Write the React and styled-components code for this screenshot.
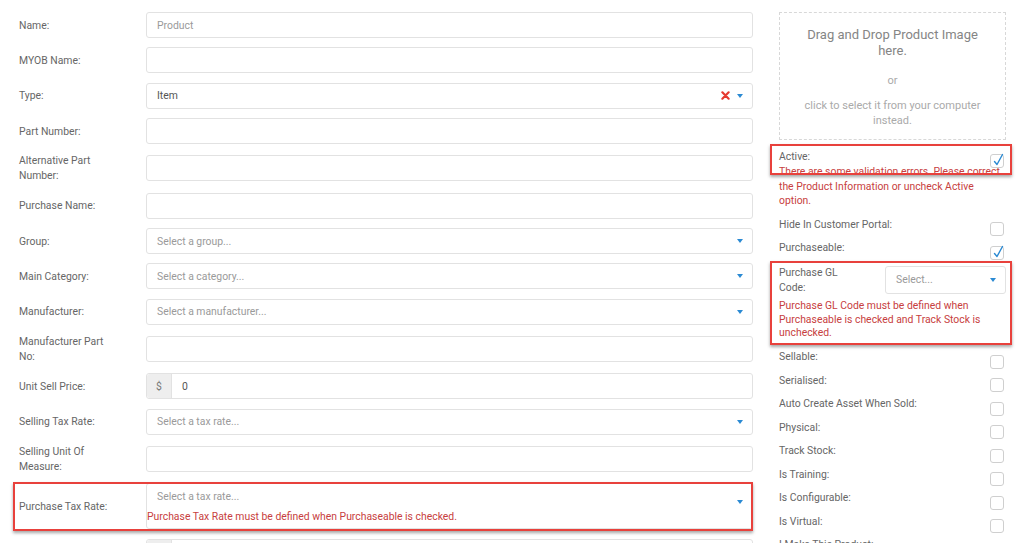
import React from 'react';
import styled, { createGlobalStyle } from 'styled-components';

const GlobalStyle = createGlobalStyle`
  html, body {
    margin: 0;
    padding: 0;
    overflow: hidden;
    background: #fff;
  }
  body {
    font-family: Roboto, "Liberation Sans", Arial, sans-serif;
    font-size: 10.4px;
    color: #666;
  }
`;

const Page = styled.div`
  display: flex;
  gap: 26px;
  padding: 12px 0 0 19px;
  width: 1024px;
  box-sizing: border-box;
`;

const LeftCol = styled.div`
  width: 734px;
  display: flex;
  flex-direction: column;
  gap: 9.35px;
`;

const RightCol = styled.div`
  width: 227px;
  display: flex;
  flex-direction: column;
`;

const Row = styled.div`
  position: relative;
  display: grid;
  grid-template-columns: 127px 1fr;
  align-items: center;
  min-height: ${(p) => (p.$tall ? 30 : 26)}px;
`;

const Label = styled.div`
  line-height: 15px;
  color: #666;
  padding-right: 10px;
`;

const Marked = styled.div`
  position: absolute;
  pointer-events: none;
  top: ${(p) => p.$t}px;
  bottom: ${(p) => p.$b}px;
  left: ${(p) => p.$l}px;
  right: ${(p) => p.$r}px;
  border: 2px solid #e8413c;
  box-shadow: 0 2px 3px rgba(0, 0, 0, 0.35);
`;

const Field = styled.div`
  position: relative;
  display: flex;
  align-items: ${(p) => (p.$top ? 'flex-start' : 'center')};
  height: ${(p) => p.$h || 26}px;
  box-sizing: border-box;
  border: 1px solid #e2e2e2;
  border-radius: 3px;
  padding: ${(p) => (p.$top ? '6px 9px 0 10px' : '0 9px 0 10px')};
  background: #fff;
`;

const Value = styled.span`
  flex: 1;
  color: ${(p) => (p.$placeholder ? '#9a9a9a' : '#555')};
  line-height: 13px;
`;

const Addon = styled.span`
  display: flex;
  align-items: center;
  justify-content: center;
  width: 24px;
  align-self: stretch;
  margin: 0 10px 0 -10px;
  background: #eee;
  border-right: 1px solid #e2e2e2;
  border-radius: 3px 0 0 3px;
  color: #777;
`;

const Caret = styled.span`
  width: 0;
  height: 0;
  border-left: 3.5px solid transparent;
  border-right: 3.5px solid transparent;
  border-top: 4px solid #2b8ad3;
  margin-top: ${(p) => p.$offset || 0}px;
`;

const ClearX = styled.svg`
  width: 9px;
  height: 9px;
  margin-right: 7px;
`;

const FieldError = styled.div`
  position: absolute;
  left: 0;
  bottom: 5px;
  color: #c74040;
  line-height: 13px;
`;

const DropZone = styled.div`
  height: 128px;
  box-sizing: border-box;
  border: 1px dashed #d8d8d8;
  display: flex;
  flex-direction: column;
  align-items: center;
  text-align: center;
  padding: 14px 20px 0;
`;

const DropTitle = styled.div`
  font-size: 13px;
  line-height: 16px;
  color: #858585;
`;

const DropHint = styled.div`
  font-size: 11px;
  line-height: 15px;
  color: #aaa;
  margin-top: ${(p) => p.$mt}px;
`;

const Group = styled.div`
  position: relative;
  margin-top: ${(p) => p.$mt || 0}px;
  padding-bottom: ${(p) => p.$pb || 0}px;
`;

const CheckRow = styled.div`
  display: flex;
  justify-content: space-between;
  align-items: flex-start;
  height: ${(p) => p.$h || 23.5}px;
`;

const CheckLabel = styled.span`
  line-height: 15px;
  padding-top: 2.5px;
  color: #666;
`;

const Box = styled.span`
  width: 14px;
  height: 14px;
  margin-top: 8px;
  margin-right: 2px;
  box-sizing: border-box;
  border: 1px solid #cfcfcf;
  border-radius: 3px;
  background: #fff;
  position: relative;
`;

const Tick = styled.svg`
  position: absolute;
  left: 1px;
  top: -2px;
  width: 12px;
  height: 14px;
`;

const Error = styled.div`
  color: #c74040;
  line-height: ${(p) => p.$lh || 14}px;
  margin-top: ${(p) => p.$mt || 0}px;
`;

const GlRow = styled.div`
  display: flex;
  justify-content: space-between;
  align-items: flex-start;
  padding-top: 4px;
`;

const GlLabel = styled.div`
  line-height: 15px;
  width: 80px;
`;

const GlSelect = styled(Field)`
  width: 121px;
  height: 28px;
  margin-top: 0.5px;
`;

function Select({ placeholder, value, clear, h, top, children }) {
  return (
    <Field $h={h} $top={top}>
      <Value $placeholder={!value}>{value || placeholder}</Value>
      {clear && (
        <ClearX viewBox="0 0 10 10">
          <path d="M1.5 1.5 L8.5 8.5 M8.5 1.5 L1.5 8.5" stroke="#e5392f" strokeWidth="2.4" strokeLinecap="round" />
        </ClearX>
      )}
      <Caret $offset={top ? 10 : 0} />
      {children}
    </Field>
  );
}

function Check({ label, checked, h }) {
  return (
    <CheckRow $h={h}>
      <CheckLabel>{label}</CheckLabel>
      <Box>
        {checked && (
          <Tick viewBox="0 0 12 14">
            <path d="M2.5 8.5 L5 11.5 L10.5 1.5" fill="none" stroke="#2b8ad3" strokeWidth="1.4" strokeLinecap="round" strokeLinejoin="round" />
          </Tick>
        )}
      </Box>
    </CheckRow>
  );
}

export default function App() {
  return (
    <>
      <GlobalStyle />
      <Page>
        <LeftCol>
          <Row>
            <Label>Name:</Label>
            <Field><Value $placeholder>Product</Value></Field>
          </Row>
          <Row>
            <Label>MYOB Name:</Label>
            <Field />
          </Row>
          <Row>
            <Label>Type:</Label>
            <Select value="Item" clear />
          </Row>
          <Row>
            <Label>Part Number:</Label>
            <Field />
          </Row>
          <Row $tall>
            <Label>Alternative Part<br />Number:</Label>
            <Field />
          </Row>
          <Row>
            <Label>Purchase Name:</Label>
            <Field />
          </Row>
          <Row>
            <Label>Group:</Label>
            <Select placeholder="Select a group..." />
          </Row>
          <Row>
            <Label>Main Category:</Label>
            <Select placeholder="Select a category..." />
          </Row>
          <Row>
            <Label>Manufacturer:</Label>
            <Select placeholder="Select a manufacturer..." />
          </Row>
          <Row $tall>
            <Label>Manufacturer Part<br />No:</Label>
            <Field />
          </Row>
          <Row>
            <Label>Unit Sell Price:</Label>
            <Field>
              <Addon>$</Addon>
              <Value>0</Value>
            </Field>
          </Row>
          <Row>
            <Label>Selling Tax Rate:</Label>
            <Select placeholder="Select a tax rate..." />
          </Row>
          <Row $tall>
            <Label>Selling Unit Of<br />Measure:</Label>
            <Field />
          </Row>
          <Row>
            <Label>Purchase Tax Rate:</Label>
            <Select placeholder="Select a tax rate..." h={46} top>
              <FieldError>Purchase Tax Rate must be defined when Purchaseable is checked.</FieldError>
            </Select>
            <Marked $t={-1} $b={-2} $l={-6} $r={0} />
          </Row>
          <Row>
            <Label>Unit Purchase Price:</Label>
            <Field>
              <Addon>$</Addon>
              <Value>0</Value>
            </Field>
          </Row>
        </LeftCol>

        <RightCol>
          <DropZone>
            <DropTitle>Drag and Drop Product Image<br />here.</DropTitle>
            <DropHint $mt={14}>or</DropHint>
            <DropHint $mt={10}>click to select it from your computer<br />instead.</DropHint>
          </DropZone>

          <Group $mt={6} $pb={5.5}>
            <Check label="Active:" checked h={19} />
            <Error $lh={14.5}>There are some validation errors. Please correct the Product Information or uncheck Active option.</Error>
            <Marked $t={-2} $b={39} $l={-9} $r={-6} />
          </Group>

          <Check label="Hide In Customer Portal:" />
          <Check label="Purchaseable:" checked />

          <Group $pb={7}>
            <GlRow>
              <GlLabel>Purchase GL<br />Code:</GlLabel>
              <GlSelect>
                <Value $placeholder>Select...</Value>
                <Caret />
              </GlSelect>
            </GlRow>
            <Error $lh={13.5} $mt={4}>Purchase GL Code must be defined when Purchaseable is checked and Track Stock is unchecked.</Error>
            <Marked $t={0} $b={2} $l={-9} $r={-6} />
          </Group>

          <Check label="Sellable:" />
          <Check label="Serialised:" />
          <Check label="Auto Create Asset When Sold:" />
          <Check label="Physical:" />
          <Check label="Track Stock:" />
          <Check label="Is Training:" />
          <Check label="Is Configurable:" />
          <Check label="Is Virtual:" />
          <Check label="I Make This Product:" />
        </RightCol>
      </Page>
    </>
  );
}
